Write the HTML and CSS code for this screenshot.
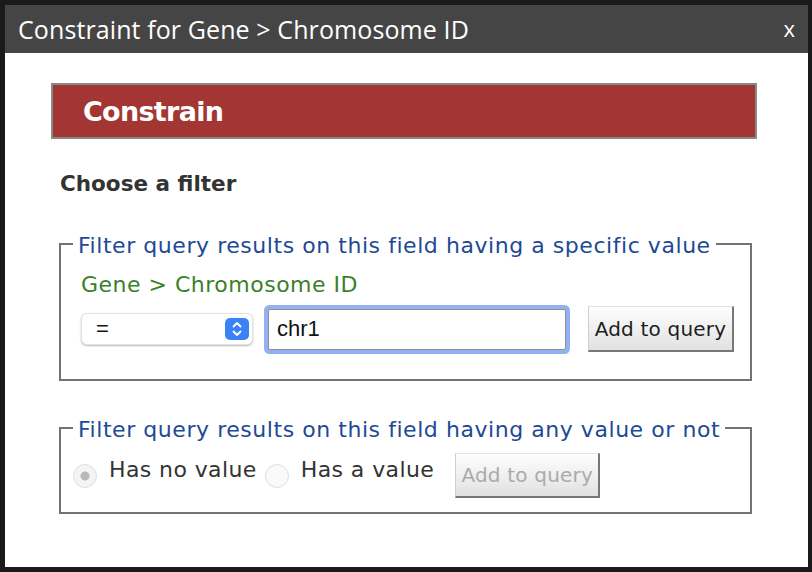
FILE: index.html
```html
<!DOCTYPE html>
<html lang="en">
<head>
<meta charset="utf-8">
<title>Constraint for Gene &gt; Chromosome ID</title>
<link rel="stylesheet" href="styles.css">
</head>
<body>
<div class="dialog">
  <div class="titlebar">
    <span class="title">Constraint for Gene &gt; Chromosome ID</span>
    <span class="close">x</span>
  </div>
  <div class="content">
    <div class="banner">Constrain</div>
    <div class="choose">Choose a filter</div>
    <fieldset class="box box-value">
      <legend>Filter query results on this field having a specific value</legend>
      <div class="path">Gene &gt; Chromosome ID</div>
      <div class="row">
        <div class="select">
          <span class="select-text">=</span>
          <svg class="stepper" width="24" height="22" viewBox="0 0 24 22">
            <rect x="0" y="0" width="24" height="22" rx="5" fill="#3b82f6"/>
            <path d="M8.5 8.5 L12 5 L15.5 8.5" fill="none" stroke="#fff" stroke-width="1.8" stroke-linecap="round" stroke-linejoin="round"/>
            <path d="M8.5 13.5 L12 17 L15.5 13.5" fill="none" stroke="#fff" stroke-width="1.8" stroke-linecap="round" stroke-linejoin="round"/>
          </svg>
        </div>
        <input class="text-input" type="text" value="chr1">
        <button class="btn" type="button">Add to query</button>
      </div>
    </fieldset>
    <fieldset class="box box-null">
      <legend>Filter query results on this field having any value or not</legend>
      <div class="row row-radio">
        <span class="radio checked"></span>
        <span class="radio-label">Has no value</span>
        <span class="radio"></span>
        <span class="radio-label">Has a value</span>
        <button class="btn btn-disabled" type="button" disabled>Add to query</button>
      </div>
    </fieldset>
  </div>
</div>
</body>
</html>
```

FILE: styles.css
```css
html, body {
  margin: 0;
  padding: 0;
}
body {
  background: #1a1a1a;
  width: 812px;
  height: 572px;
  overflow: hidden;
  font-family: "DejaVu Sans", sans-serif;
}
.dialog {
  margin: 5px 4px 0 5px;
  width: 803px;
  height: 562px;
  background: #ffffff;
  display: flex;
  flex-direction: column;
}
.titlebar {
  height: 48px;
  background: #454545;
  display: flex;
  align-items: center;
  justify-content: space-between;
  padding: 0 13px 0 13px;
  color: #ffffff;
  font-family: "Open Sans", sans-serif;
  font-size: 25px;
}
.title {
  letter-spacing: 0.1px;
}
.close {
  font-size: 22px;
  padding-bottom: 2px;
}
.content {
  padding: 30px 51px 0 46px;
}
.banner {
  height: 52px;
  border: 2px solid #898989;
  background: #a33532;
  color: #ffffff;
  font-weight: bold;
  font-size: 27px;
  letter-spacing: -0.7px;
  padding-left: 30px;
  display: flex;
  align-items: center;
}
.choose {
  margin: 32px 0 0 9px;
  font-weight: bold;
  font-size: 21.5px;
  line-height: 26px;
  color: #333333;
}
.box {
  margin: 0 5px 0 8px;
  padding: 0;
  border: 2px solid #737373;
  min-width: 0;
}
.box-value {
  margin-top: 31px;
  padding-bottom: 27px;
}
.box-null {
  margin-top: 31px;
  padding-bottom: 14px;
}
.box legend {
  margin-left: 12px;
  padding: 5px 5px 0 5px;
  font-size: 22px;
  line-height: 26px;
  letter-spacing: 0.55px;
  color: #1d4a95;
}
.path {
  margin: 13px 0 0 20px;
  font-size: 22px;
  line-height: 26px;
  letter-spacing: 0.5px;
  color: #3b7f2a;
}
.row {
  display: flex;
  align-items: center;
  margin: 8px 0 0 20px;
}
.select {
  width: 172px;
  height: 32px;
  box-sizing: border-box;
  background: #ffffff;
  border-radius: 6px;
  border: 1px solid #e3e3e3;
  box-shadow: 0 1px 2px rgba(0, 0, 0, 0.28);
  display: flex;
  align-items: center;
  justify-content: space-between;
  padding: 0 3px 0 14px;
}
.select-text {
  font-family: "Liberation Sans", sans-serif;
  font-size: 22px;
  color: #111;
}
.stepper {
  display: block;
}
.text-input {
  margin-left: 15px;
  width: 298px;
  height: 41px;
  box-sizing: border-box;
  border: 1px solid #8f8f8f;
  border-radius: 2px;
  box-shadow: 0 0 0 4px #93b1f2;
  padding: 0 0 0 8px;
  font-family: "Liberation Sans", sans-serif;
  font-size: 22px;
  color: #111;
  outline: none;
  background: #fff;
}
.btn {
  margin-left: 22px;
  width: 146px;
  height: 46px;
  box-sizing: border-box;
  border-style: solid;
  border-width: 1px 2px 2px 1px;
  border-color: #e2e2e2 #777777 #777777 #cfcfcf;
  background: linear-gradient(#fefefe, #e1e1e1);
  font-family: "DejaVu Sans", sans-serif;
  font-size: 20px;
  letter-spacing: 0.2px;
  color: #1e1e1e;
  padding: 0;
  border-radius: 0;
}
.row-radio {
  margin: 10px 0 0 12px;
}
.radio {
  width: 24px;
  height: 24px;
  box-sizing: border-box;
  border-radius: 50%;
  border: 1px solid #dedede;
  background: #fafafa;
  flex: none;
}
.radio.checked {
  background: radial-gradient(circle, #b9b9b9 0, #b9b9b9 4px, #f4f4f4 5px);
}
.radio-label {
  margin: 0 8px 12px 12px;
  font-size: 22px;
  line-height: 26px;
  letter-spacing: 0.4px;
  color: #333333;
}
.btn-disabled {
  margin-left: 13px;
  width: 145px;
  height: 45px;
  color: #ababab;
}
```
